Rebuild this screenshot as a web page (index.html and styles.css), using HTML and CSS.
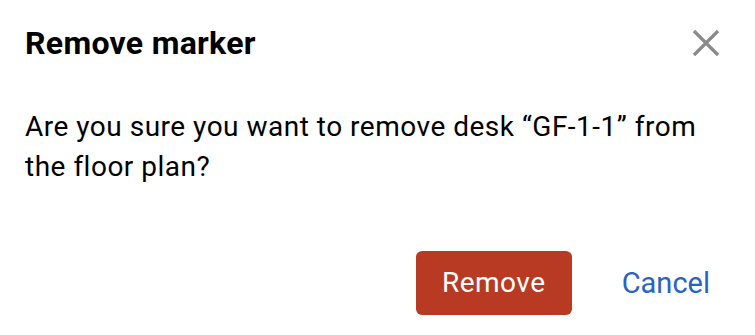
FILE: index.html
```html
<!DOCTYPE html>
<html>
<head>
<meta charset="utf-8">
<link rel="stylesheet" href="styles.css">
</head>
<body>
<div class="dialog">
  <div class="header">
    <h1 class="title">Remove marker</h1>
    <button class="close" aria-label="Close">
      <svg width="28" height="28" viewBox="0 0 28 28"><path d="M2 2 L26 26 M26 2 L2 26" stroke="#8a8a8a" stroke-width="3.2" stroke-linecap="butt"/></svg>
    </button>
  </div>
  <p class="message">Are you sure you want to remove desk “GF-1-1” from the floor plan?</p>
  <div class="footer">
    <button class="btn-remove">Remove</button>
    <button class="btn-cancel">Cancel</button>
  </div>
</div>
</body>
</html>
```
FILE: styles.css
```css
html, body {
  margin: 0;
  padding: 0;
  background: #ffffff;
}
body {
  font-family: Roboto, "Liberation Sans", sans-serif;
  color: #000;
}
.dialog {
  width: 755px;
  height: 335px;
  box-sizing: border-box;
  padding: 24px 35px 0 25px;
  display: flex;
  flex-direction: column;
}
.header {
  display: flex;
  justify-content: space-between;
  align-items: center;
}
.title {
  margin: 0;
  font-size: 32px;
  font-weight: 700;
  line-height: 1.2;
  letter-spacing: 0.3px;
}
.close {
  border: 0;
  background: none;
  padding: 0;
  width: 28px;
  height: 28px;
  display: flex;
}
.message {
  margin: 45px 0 0 0;
  font-size: 28px;
  line-height: 1.4;
  font-weight: 400;
  letter-spacing: 0.5px;
  padding-right: 10px;
}
.footer {
  display: flex;
  justify-content: flex-end;
  align-items: center;
  gap: 50px;
  margin-top: 65px;
  padding-right: 10px;
}
.btn-remove {
  font-family: Roboto, "Liberation Sans", sans-serif;
  font-size: 28px;
  letter-spacing: 0.5px;
  color: #ffffff;
  background: #b83a22;
  border: 0;
  border-radius: 6px;
  width: 156px;
  height: 64px;
  padding: 0;
}
.btn-cancel {
  font-family: Roboto, "Liberation Sans", sans-serif;
  font-size: 29px;
  color: #2a62c4;
  background: none;
  border: 0;
  padding: 0;
}
```
